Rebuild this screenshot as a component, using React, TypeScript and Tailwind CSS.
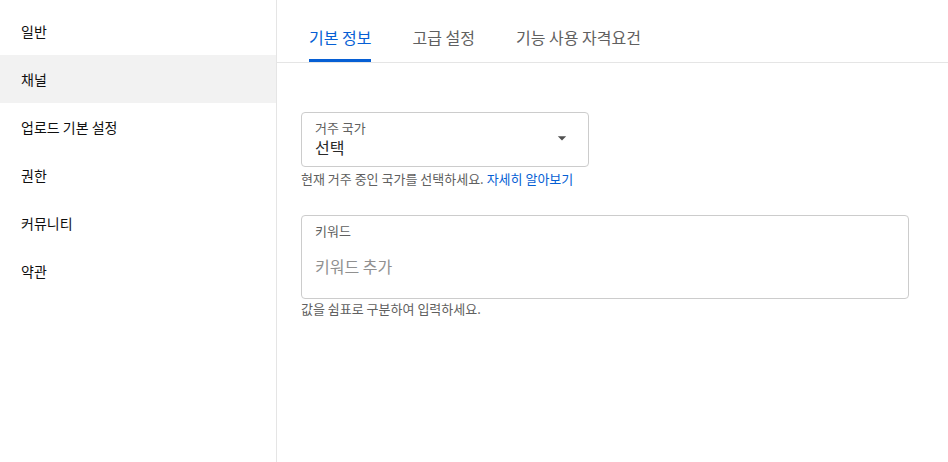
import { useState } from "react";

const menuItems = ["일반", "채널", "업로드 기본 설정", "권한", "커뮤니티", "약관"];
const tabs = ["기본 정보", "고급 설정", "기능 사용 자격요건"];

function DropArrow() {
  return (
    <svg width="20" height="20" viewBox="0 0 24 24" className="fill-[#505050]">
      <path d="M7 10l5 5 5-5z" />
    </svg>
  );
}

export default function App() {
  const [activeMenu, setActiveMenu] = useState("채널");
  const [activeTab, setActiveTab] = useState("기본 정보");

  return (
    <div className="flex min-h-[462px] bg-white text-[#0f0f0f] font-['Noto_Sans_CJK_KR',sans-serif]">
      {/* Sidebar */}
      <nav className="w-[277px] shrink-0 border-r border-[#e5e5e5] pt-[7px]">
        {menuItems.map((item) => (
          <div
            key={item}
            onClick={() => setActiveMenu(item)}
            className={`flex h-12 cursor-pointer items-center pl-[21px] text-[14px] leading-5 ${
              activeMenu === item ? "bg-[#f2f2f2]" : ""
            }`}
          >
            {item}
          </div>
        ))}
      </nav>

      {/* Main */}
      <main className="flex-1">
        <div className="flex h-[63px] gap-[41px] border-b border-[#e5e5e5] pl-8">
          {tabs.map((tab) => (
            <button
              key={tab}
              onClick={() => setActiveTab(tab)}
              className={`h-[62px] border-b-[3px] pt-[15px] text-[16px] leading-5 ${
                activeTab === tab
                  ? "border-[#065fd4] text-[#065fd4]"
                  : "border-transparent text-[#606060]"
              }`}
            >
              {tab}
            </button>
          ))}
        </div>

        <div className="pl-6 pt-[49px]">
          {/* Country select */}
          <div className="flex w-[288px] items-center justify-between rounded-[4px] border border-[#cccccc] pb-[9px] pl-[13px] pr-[16px] pt-[6px]">
            <div>
              <div className="text-[13px] leading-[18px] text-[#606060]">거주 국가</div>
              <div className="text-[16px] leading-5 text-[#282828]">선택</div>
            </div>
            <DropArrow />
          </div>
          <p className="mt-[4px] text-[13px] leading-4 text-[#606060]">
            현재 거주 중인 국가를 선택하세요.{" "}
            <a className="text-[#065fd4]">자세히 알아보기</a>
          </p>

          {/* Keywords */}
          <div className="mt-[28px] w-[608px] rounded-[4px] border border-[#cccccc] pb-[22px] pl-[13px] pt-[7px]">
            <div className="text-[13px] leading-4 text-[#606060]">키워드</div>
            <input
              placeholder="키워드 추가"
              className="mt-[17px] block h-5 w-full text-[16px] leading-5 outline-none placeholder:text-[#909090]"
            />
          </div>
          <p className="mt-[2px] text-[13px] leading-4 text-[#606060]">
            값을 쉼표로 구분하여 입력하세요.
          </p>
        </div>
      </main>
    </div>
  );
}
